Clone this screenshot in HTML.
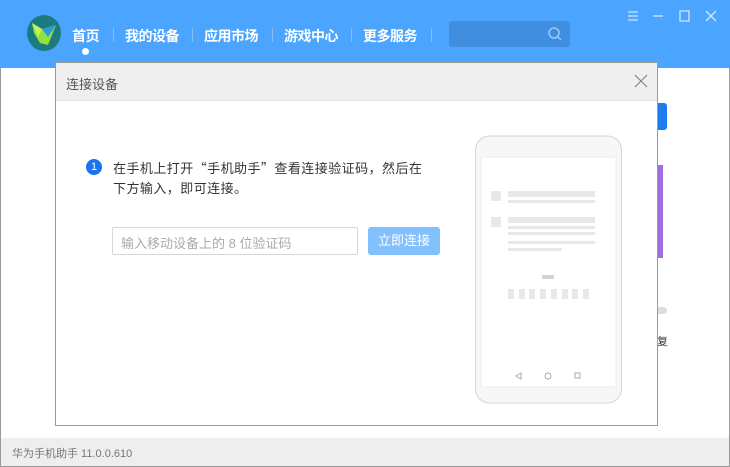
<!DOCTYPE html>
<html><head><meta charset="utf-8"><style>
*{margin:0;padding:0;box-sizing:border-box}
body{width:730px;height:467px;overflow:hidden;position:relative;background:#fff;font-family:"Liberation Sans","Noto Sans CJK SC",sans-serif}
.win{position:absolute;inset:0;border:1px solid #9a9a9a}
.hdr{position:absolute;left:0;top:0;width:730px;height:68px;background:#4ba5fe}
.nav{position:absolute;top:26px;color:#fff;font-size:14px;font-weight:bold;letter-spacing:-0.5px}
.sep{position:absolute;top:28px;width:1px;height:14px;background:#7fc0ff}
.search{position:absolute;left:449px;top:21px;width:121px;height:26px;background:#3f8ee0;border-radius:3px}
.foot{position:absolute;left:1px;top:438px;width:728px;height:28px;background:#eeeeee;font-size:11px;color:#777;padding:7px 0 0 11px}
.dlg{position:absolute;left:55px;top:62px;width:603px;height:364px;border:1px solid #9a9a9a;background:#fff}
.dt{height:38px;background:#efefef;border-bottom:1px solid #e4e4e4;font-size:13px;color:#555;padding:11px 0 0 10px}
</style></head><body>
<div class="win"></div>
<div class="hdr">
<svg style="position:absolute;left:26px;top:15px" width="36" height="36" viewBox="0 0 36 36"><ellipse cx="18" cy="18" rx="17" ry="18" fill="#1d7a7e"/><polygon points="6,8 16,14 30,10 22,30 14,28 8,18" fill="#8ee23b"/><polygon points="16,14 30,10 22,22" fill="#2a9be0"/><polygon points="6,8 16,14 12,22" fill="#c7f05a"/></svg>
<div class="nav" style="left:72px">首页</div>
<div style="position:absolute;left:82px;top:48px;width:7px;height:7px;border-radius:50%;background:#fff"></div>
<div class="sep" style="left:113px"></div>
<div class="nav" style="left:125px">我的设备</div>
<div class="sep" style="left:192px"></div>
<div class="nav" style="left:204px">应用市场</div>
<div class="sep" style="left:272px"></div>
<div class="nav" style="left:284px">游戏中心</div>
<div class="sep" style="left:351px"></div>
<div class="nav" style="left:363px">更多服务</div>
<div class="sep" style="left:431px"></div>
<div class="search"><svg style="position:absolute;left:98px;top:5px" width="16" height="16" viewBox="0 0 16 16"><circle cx="7" cy="7" r="5" fill="none" stroke="#9cc9f5" stroke-width="1.5"/><line x1="11" y1="11" x2="14" y2="14" stroke="#9cc9f5" stroke-width="1.5"/></svg></div>
<svg style="position:absolute;left:626px;top:9px" width="96" height="14" viewBox="0 0 96 14" stroke="#cfe6ff" stroke-width="1.3" fill="none"><path d="M2 3h10M2 7h10M2 11h10"/><path d="M27 7h10"/><rect x="54" y="2" width="9" height="10"/><path d="M80 2l10 10M90 2l-10 10"/></svg>
</div>
<div style="position:absolute;left:657px;top:103px;width:10px;height:27px;background:#1f7bf2;border-radius:0 3px 3px 0"></div>
<div style="position:absolute;left:657px;top:165px;width:6px;height:93px;background:#a56ee0"></div>
<div style="position:absolute;left:657px;top:307px;width:10px;height:7px;background:#ddd;border-radius:0 4px 4px 0"></div>
<div style="position:absolute;left:657px;top:333px;font-size:11px;color:#333">复</div>
<div class="dlg">
<div class="dt">连接设备</div>
<svg style="position:absolute;left:578px;top:11px" width="14" height="14" viewBox="0 0 14 14" stroke="#888" stroke-width="1.2"><path d="M1 1l12 12M13 1L1 13"/></svg>
<div style="position:absolute;left:30px;top:96px;width:16px;height:16px;border-radius:50%;background:#1a73f0;color:#fff;font-size:11px;text-align:center;line-height:16px">1</div>
<div style="position:absolute;left:57px;top:95px;width:340px;font-size:13px;color:#333;line-height:20px;letter-spacing:0.45px;font-family:'Noto Sans CJK SC',sans-serif">在手机上打开“手机助手”查看连接验证码，然后在<br>下方输入，即可连接。</div>
<div style="position:absolute;left:56px;top:164px;width:246px;height:28px;border:1px solid #d8d8d8;border-radius:2px;font-size:13px;color:#aaa;padding:5px 0 0 8px">输入移动设备上的 8 位验证码</div>
<div style="position:absolute;left:312px;top:164px;width:72px;height:28px;background:#82c1fb;border-radius:3px;color:#fff;font-size:13px;text-align:center;line-height:28px">立即连接</div>
<svg style="position:absolute;left:418px;top:72px" width="150" height="270" viewBox="0 0 150 270">
<rect x="1.5" y="1" width="146" height="267" rx="14" fill="#f7f7f7" stroke="#d6d6d6"/>
<rect x="7" y="22" width="135" height="230" fill="#fff" stroke="#ececec"/>
<g fill="#e8e8e8"><rect x="17" y="56" width="10" height="10"/><rect x="34" y="56" width="87" height="6"/><rect x="34" y="65" width="87" height="3"/>
<rect x="17" y="82" width="10" height="10"/><rect x="34" y="82" width="87" height="6"/><rect x="34" y="91" width="87" height="3"/><rect x="34" y="97" width="87" height="3"/><rect x="34" y="106" width="87" height="3"/><rect x="34" y="113" width="54" height="3"/>
<rect x="68" y="140" width="12" height="4" fill="#d4d4d4"/>
<rect x="34" y="154" width="6" height="10"/><rect x="45" y="154" width="6" height="10"/><rect x="55" y="154" width="6" height="10"/><rect x="66" y="154" width="6" height="10"/><rect x="77" y="154" width="6" height="10"/><rect x="88" y="154" width="6" height="10"/><rect x="98" y="154" width="6" height="10"/><rect x="109" y="154" width="6" height="10"/></g>
<g fill="none" stroke="#aaa"><path d="M47 238l-5 3 5 3z"/><circle cx="74" cy="241" r="3"/><rect x="101" y="238" width="5" height="5"/></g>
</svg>
</div>
<div class="foot">华为手机助手 11.0.0.610</div>
</body></html>
